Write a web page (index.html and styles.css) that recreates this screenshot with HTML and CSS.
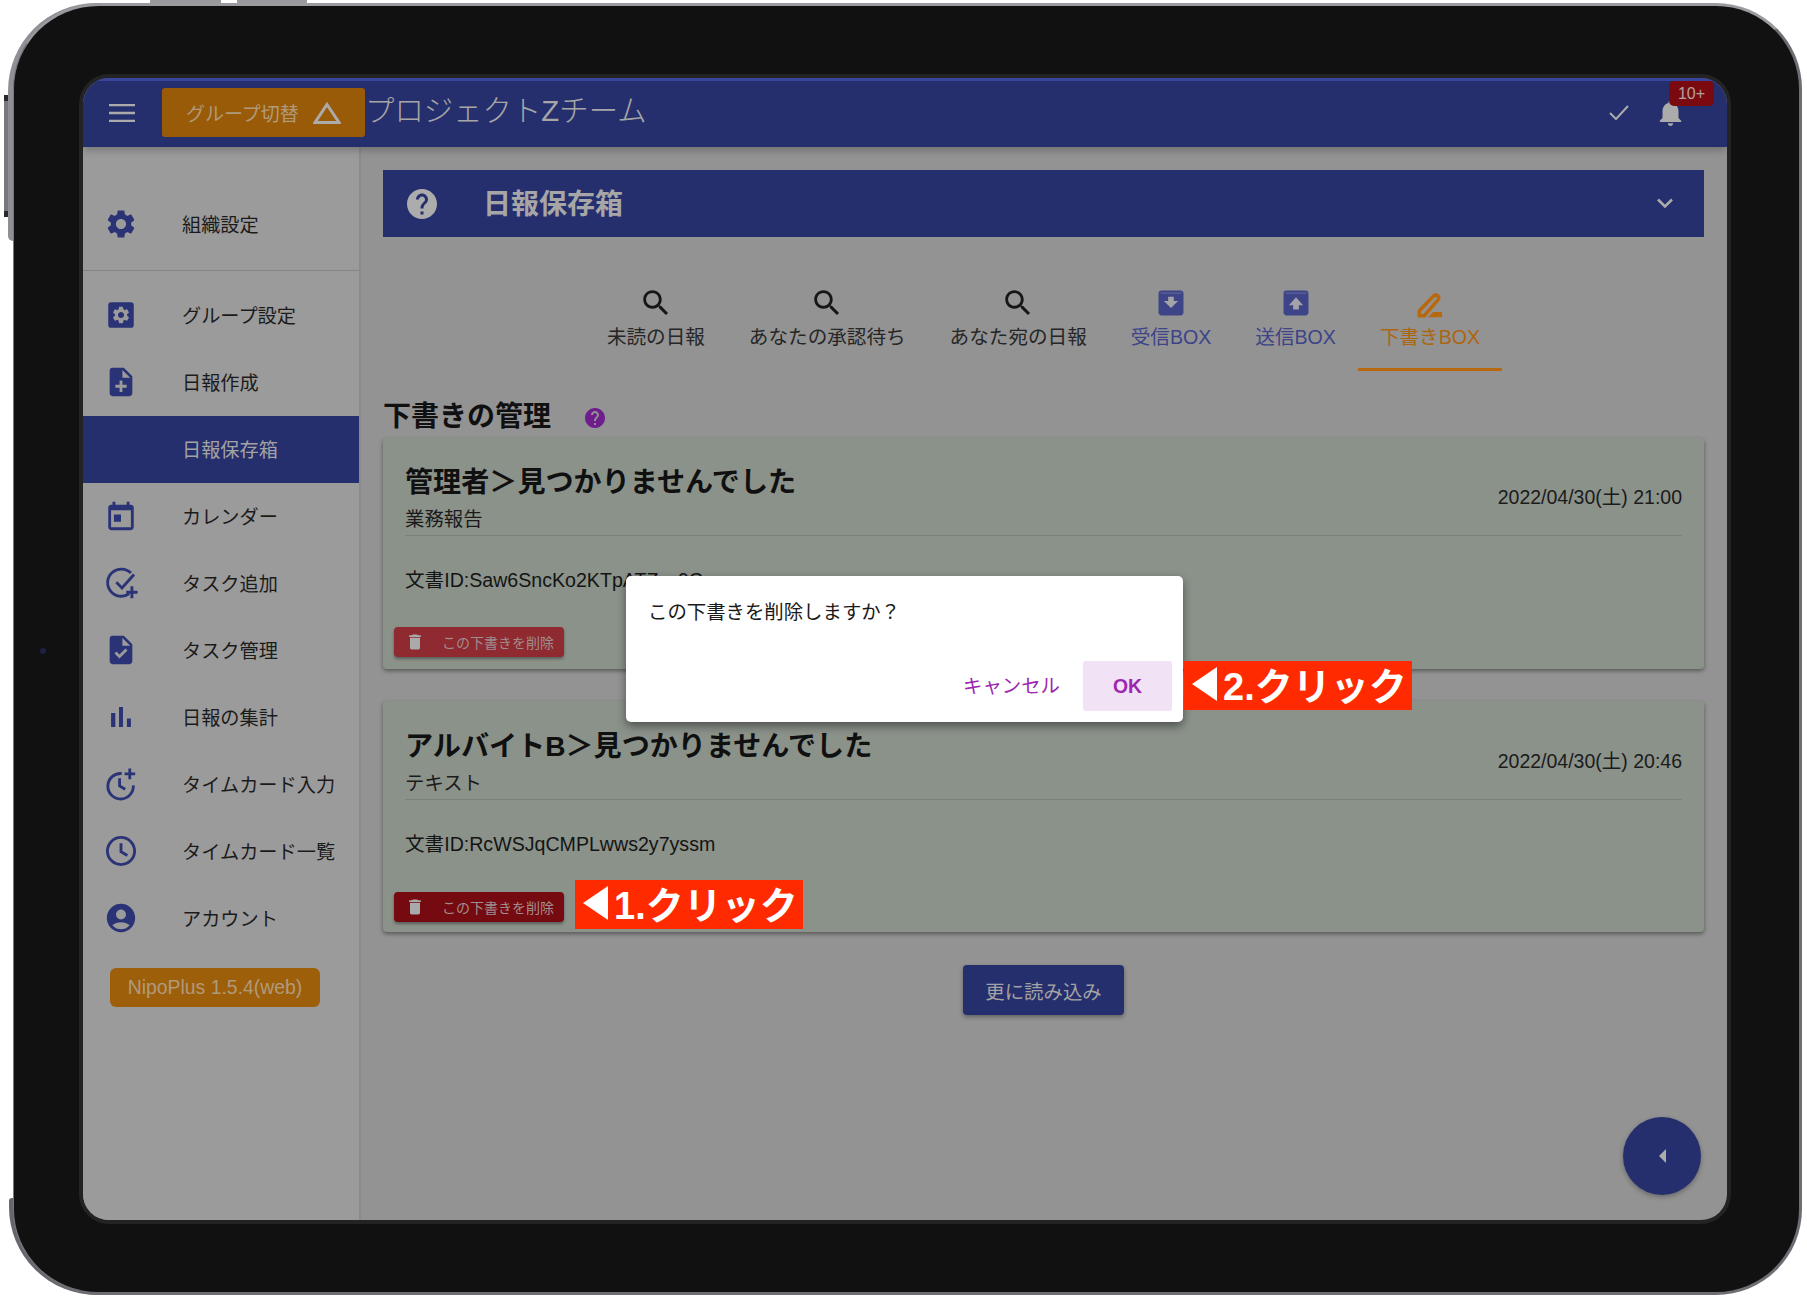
FILE: index.html
```html
<!DOCTYPE html>
<html lang="ja">
  <head>
    <title>日報保存箱</title>
    <link rel="stylesheet" href="styles.css">
  </head>
  <body>
    <svg class="sprite" width="0" height="0">
      <symbol id="i-search" viewBox="0 0 24 24"><path d="M15.5 14h-.79l-.28-.27C15.41 12.59 16 11.11 16 9.5 16 5.91 13.09 3 9.5 3S3 5.91 3 9.5 5.91 16 9.5 16c1.61 0 3.09-.59 4.23-1.57l.27.28v.79l5 4.99L20.49 19l-4.99-5zm-6 0C7.01 14 5 11.99 5 9.5S7.01 5 9.5 5 14 7.01 14 9.5 11.99 14 9.5 14z"/></symbol>
      <symbol id="i-trash" viewBox="0 0 24 24"><path d="M6 19c0 1.1.9 2 2 2h8c1.1 0 2-.9 2-2V7H6v12zM19 4h-3.5l-1-1h-5l-1 1H5v2h14V4z"/></symbol>
      <symbol id="i-help" viewBox="0 0 24 24"><path d="M12 2C6.48 2 2 6.48 2 12s4.48 10 10 10 10-4.48 10-10S17.52 2 12 2zm1 17h-2v-2h2v2zm2.07-7.75l-.9.92C13.45 12.9 13 13.5 13 15h-2v-.5c0-1.1.45-2.1 1.17-2.83l1.24-1.26c.37-.36.59-.86.59-1.41 0-1.1-.9-2-2-2s-2 .9-2 2H8c0-2.21 1.79-4 4-4s4 1.79 4 4c0 .88-.36 1.68-.93 2.25z"/></symbol>
      <symbol id="i-gear" viewBox="0 0 24 24"><path d="M19.14 12.94c.04-.3.06-.61.06-.94 0-.32-.02-.64-.07-.94l2.03-1.58c.18-.14.23-.41.12-.61l-1.92-3.32c-.12-.22-.37-.29-.59-.22l-2.39.96c-.5-.38-1.03-.7-1.62-.94l-.36-2.54c-.04-.24-.24-.41-.48-.41h-3.84c-.24 0-.43.17-.47.41l-.36 2.54c-.59.24-1.13.57-1.62.94l-2.39-.96c-.22-.08-.47 0-.59.22L2.74 8.87c-.12.21-.08.47.12.61l2.03 1.58c-.05.3-.09.63-.09.94s.02.64.07.94l-2.03 1.58c-.18.14-.23.41-.12.61l1.92 3.32c.12.22.37.29.59.22l2.39-.96c.5.38 1.03.7 1.62.94l.36 2.54c.05.24.24.41.48.41h3.84c.24 0 .44-.17.47-.41l.36-2.54c.59-.24 1.13-.56 1.62-.94l2.39.96c.22.08.47 0 .59-.22l1.92-3.32c.12-.22.07-.47-.12-.61l-2.01-1.58zM12 15.6c-1.98 0-3.6-1.62-3.6-3.6s1.62-3.6 3.6-3.6 3.6 1.62 3.6 3.6-1.62 3.6-3.6 3.6z"/></symbol>
    </svg>

    <div class="side-key side-key-a"></div>
    <div class="side-key side-key-b"></div>
    <div class="side-rocker"></div>
    <div class="edge edge-top"></div>
    <div class="edge edge-bottom"></div>
    <div class="tablet">
      <span class="camera"></span>
      <div class="screen">

        <!-- top bar -->
        <header class="appbar">
          <svg class="burger" viewBox="0 0 26 18"><path d="M0 1h26M0 9h26M0 17h26"/></svg>
          <div class="group-btn">
            <span>グループ切替</span>
            <svg class="group-tri" viewBox="0 0 28 22"><path d="M14 2.5 26 20.5H2Z"/></svg>
          </div>
          <div class="app-title">プロジェクトZチーム</div>
          <div class="app-actions">
            <svg class="app-check" viewBox="0 0 20 15"><path d="M1 8l6 6L19 1"/></svg>
            <svg class="app-bell" viewBox="4 2.5 16 19.5"><path d="M12 22c1.1 0 2-.9 2-2h-4c0 1.1.89 2 2 2zm6-6v-5c0-3.07-1.64-5.64-4.5-6.32V4c0-.83-.67-1.5-1.5-1.5s-1.5.67-1.5 1.5v.68C7.63 5.36 6 7.92 6 11v5l-2 2v1h16v-1l-2-2z"/></svg>
            <span class="badge">10+</span>
          </div>
        </header>

        <div class="body">
          <!-- left menu -->
          <nav class="sidebar">
            <a class="nav-item nav-first">
              <svg class="nav-icon" viewBox="0 0 24 24"><use href="#i-gear"/></svg>組織設定
            </a>
            <div class="nav-rule"></div>
            <a class="nav-item">
              <svg class="nav-icon" viewBox="0 0 24 24"><rect x="3" y="3" width="18" height="18" rx="2"/><g transform="translate(4.8 4.8) scale(.6)" class="hole"><use href="#i-gear" width="24" height="24"/></g></svg>グループ設定
            </a>
            <a class="nav-item">
              <svg class="nav-icon" viewBox="0 0 24 24"><path d="M14 2H6c-1.1 0-1.99.9-1.99 2L4 20c0 1.1.89 2 1.99 2H18c1.1 0 2-.9 2-2V8l-6-6zm2 14h-3v3h-2v-3H8v-2h3v-3h2v3h3v2zm-3-7V3.5L18.5 9H13z"/></svg>日報作成
            </a>
            <a class="nav-item nav-active">日報保存箱</a>
            <a class="nav-item">
              <svg class="nav-icon" viewBox="0 0 24 24"><path d="M19 4h-1V2h-2v2H8V2H6v2H5c-1.11 0-1.99.9-1.99 2L3 20c0 1.1.89 2 2 2h14c1.1 0 2-.9 2-2V6c0-1.1-.9-2-2-2zm0 16H5V8h14v12zM7 11h5v5H7z"/></svg>カレンダー
            </a>
            <a class="nav-item">
              <svg class="nav-icon nav-line" viewBox="0 0 24 24"><g transform="translate(1.2 0)"><path d="M16.5 19.600A9.600 9.600 0 1 1 17.800 5"/><path d="M7.500 11.500l4 4L20 6"/><path d="M14.500 18.500h8M18.500 14.300v8.400"/></g></svg>タスク追加
            </a>
            <a class="nav-item">
              <svg class="nav-icon" viewBox="0 0 24 24"><path d="M14 2H6c-1.1 0-1.99.9-1.99 2L4 20c0 1.1.89 2 1.99 2H18c1.1 0 2-.9 2-2V8l-6-6zm-3.06 16L7.4 14.46l1.41-1.41 2.12 2.12 4.24-4.24 1.41 1.41L10.94 18zM13 9V3.5L18.5 9H13z"/></svg>タスク管理
            </a>
            <a class="nav-item">
              <svg class="nav-icon" viewBox="0 0 24 24"><path d="M5 9.2h3V19H5zM10.6 5h2.8v14h-2.8zm5.6 8H19v6h-2.8z"/></svg>日報の集計
            </a>
            <a class="nav-item">
              <svg class="nav-icon nav-line" viewBox="0 0 24 24"><path d="M12.500 4.600A9 9 0 1 0 20.700 13"/><path d="M11 8v5.300l4 2.400"/><path d="M14.500 4.800h7.500M18.200 1v7.600"/></svg>タイムカード入力
            </a>
            <a class="nav-item">
              <svg class="nav-icon nav-line" viewBox="0 0 24 24"><circle cx="12" cy="12" r="9.600"/><path d="M12 6.500v6l4.500 2.700"/></svg>タイムカード一覧
            </a>
            <a class="nav-item">
              <svg class="nav-icon" viewBox="0 0 24 24"><path d="M12 2C6.48 2 2 6.48 2 12s4.48 10 10 10 10-4.48 10-10S17.52 2 12 2zm0 4c1.93 0 3.5 1.57 3.5 3.5S13.93 13 12 13s-3.5-1.57-3.5-3.5S10.07 6 12 6zm0 14c-2.03 0-4.43-.82-6.14-2.88C7.55 15.8 9.68 15 12 15s4.45.8 6.14 2.12C16.43 19.18 14.03 20 12 20z"/></svg>アカウント
            </a>
            <div class="version">NipoPlus 1.5.4(web)</div>
          </nav>

          <main class="main">
            <div class="panel-head">
              <svg class="panel-help"><use href="#i-help"/></svg>
              <span class="panel-title">日報保存箱</span>
              <svg class="panel-chevron" viewBox="0 0 16 10"><path d="M1 1.5l7 7 7-7"/></svg>
            </div>

            <div class="tabs">
              <div class="tab">
                <svg class="tab-icon"><use href="#i-search"/></svg>未読の日報
              </div>
              <div class="tab">
                <svg class="tab-icon"><use href="#i-search"/></svg>あなたの承認待ち
              </div>
              <div class="tab">
                <svg class="tab-icon"><use href="#i-search"/></svg>あなた宛の日報
              </div>
              <div class="tab tab-blue">
                <svg class="tab-icon" viewBox="0 0 24 24"><rect x="3.200" y="3.200" width="17.600" height="17.600" rx="2.200"/><path class="hole-line" d="M4.500 5h15"/><path class="hole" d="M10 7.500h4v3h3l-5 5-5-5h3z"/></svg>受信BOX
              </div>
              <div class="tab tab-blue">
                <svg class="tab-icon" viewBox="0 0 24 24"><rect x="3.200" y="3.200" width="17.600" height="17.600" rx="2.200"/><path class="hole-line" d="M4.500 5h15"/><path class="hole" d="M10 16.500v-3H7l5-5.500 5 5.500h-3v3z"/></svg>送信BOX
              </div>
              <div class="tab tab-on">
                <svg class="tab-icon" viewBox="0 0 24 24"><path class="pen" d="M4.500 21 4.500 17.500 14.500 7c1-1 2-1 3 0 .8.8.8 2 0 3L8 21z"/><path d="M10.500 22 14.200 18.400H20.500V22z"/></svg>下書きBOX
              </div>
            </div>

            <h2 class="section-title">下書きの管理
              <svg class="section-help"><use href="#i-help"/></svg>
            </h2>

            <section class="card">
              <div class="card-head">
                <div>
                  <h3 class="card-title">管理者＞見つかりませんでした</h3>
                  <div class="card-sub">業務報告</div>
                </div>
                <div class="card-date">2022/04/30(土) 21:00</div>
              </div>
              <div class="card-doc">文書ID:Saw6SncKo2KTpATZxx9C</div>
              <button class="del-btn del-btn-focus"><svg class="del-icon"><use href="#i-trash"/></svg>この下書きを削除</button>
            </section>

            <section class="card">
              <div class="card-head">
                <div>
                  <h3 class="card-title">アルバイトB＞見つかりませんでした</h3>
                  <div class="card-sub">テキスト</div>
                </div>
                <div class="card-date">2022/04/30(土) 20:46</div>
              </div>
              <div class="card-doc">文書ID:RcWSJqCMPLwws2y7yssm</div>
              <button class="del-btn"><svg class="del-icon"><use href="#i-trash"/></svg>この下書きを削除</button>
            </section>

            <button class="more-btn">更に読み込み</button>
          </main>
        </div>

        <!-- confirm dialog and the red notes laid over the shot -->
        <div class="dialog">
          <div class="dialog-text">この下書きを削除しますか？</div>
          <div class="dialog-actions">
            <span class="dialog-cancel">キャンセル</span>
            <span class="dialog-ok">OK</span>
          </div>
        </div>
        <div class="note note-two"><i class="note-arrow"></i>2.クリック</div>
        <div class="note note-one"><i class="note-arrow"></i>1.クリック</div>
        <div class="fab"><i class="fab-arrow"></i></div>
      </div>
    </div>
  </body>
</html>
```

FILE: styles.css
```css
html, body {
  margin: 0;
  background: #fff;
}

body {
  width: 1807px;
  height: 1302px;
  overflow: hidden;
  position: relative;
  font-family: "Liberation Sans", "Noto Sans CJK JP", sans-serif;
  font-size: 19.4px;
  color: #1c1c1c;
}

.sprite {
  position: absolute;
}

/* Device frame */
.tablet {
  box-sizing: border-box;
  position: relative;
  width: 1789px;
  height: 1292px;
  margin: 3px 0 0 13px;
  padding: 72px 0 0 69px;
  background: #111;
  border: 3px solid #6d6d74;
  border-top-color: #9a9a9f;
  border-left: 1px solid #77777c;
  border-radius: 86px;
}

.side-key {
  position: absolute;
  top: 0;
  height: 3px;
  background: #9a9a9e;
}

.side-key-a {
  left: 150px;
  width: 71px;
}

.side-key-b {
  left: 237px;
  width: 70px;
}

.side-rocker {
  position: absolute;
  left: 4px;
  top: 95px;
  width: 4px;
  height: 122px;
  background: #77777c;
  border-top: 6px solid #2a2a2c;
  border-bottom: 6px solid #2a2a2c;
  box-sizing: border-box;
}

/* Thicker rim at the left corners, sits under the tablet body */
.edge {
  position: absolute;
  left: 8px;
  width: 110px;
  background: #8f8f95;
}

.edge-top {
  top: 3px;
  height: 238px;
  border-top-left-radius: 88px;
  border-bottom-left-radius: 5px;
}

.edge-bottom {
  top: 1198px;
  height: 97px;
  left: 9px;
  background: #66666d;
  border-top-left-radius: 3px;
  border-bottom-left-radius: 88px;
}

.camera {
  position: absolute;
  left: 26px;
  top: 642px;
  width: 6px;
  height: 6px;
  border-radius: 50%;
  background: #1d2244;
}

.screen {
  position: relative;
  display: flex;
  flex-direction: column;
  width: 1644px;
  height: 1142px;
  border-radius: 26px;
  overflow: hidden;
  background: #939393;
  box-shadow: 0 0 0 4px #232323;
}

/* Top bar */
.appbar {
  box-sizing: border-box;
  position: relative;
  z-index: 2;
  display: flex;
  align-items: center;
  flex: none;
  height: 69px;
  padding: 0 0 3px 26px;
  background: #262f6e;
  border-top: 3px solid #37459c;
  box-shadow: 0 3px 8px rgba(0, 0, 0, .25);
  color: #a8a8a8;
}

.burger {
  width: 26px;
  height: 18px;
  fill: none;
  stroke: #ababab;
  stroke-width: 2.5;
}

.group-btn {
  box-sizing: border-box;
  display: flex;
  align-items: center;
  justify-content: space-between;
  width: 203px;
  height: 49px;
  margin-left: 27px;
  padding: 0 24px;
  background: #9a5b08;
  border-radius: 3px;
  font-size: 19px;
  color: #b09a7c;
}

.group-tri {
  width: 28px;
  height: 22px;
  fill: none;
  stroke: #ababab;
  stroke-width: 3;
}

.app-title {
  margin: -10px 0 0 0;
  font-size: 29.4px;
  font-weight: 300;
  color: #a6a6a6;
}

.app-actions {
  position: relative;
  display: flex;
  align-items: center;
  margin-left: auto;
  margin-right: 45px;
}

.app-check {
  width: 20px;
  height: 15px;
  margin-right: 30px;
  fill: none;
  stroke: #ababab;
  stroke-width: 2;
}

.app-bell {
  width: 23px;
  height: 26px;
  fill: #ababab;
}

.badge {
  position: absolute;
  left: 60px;
  top: -19px;
  width: 45px;
  height: 25px;
  line-height: 25px;
  text-align: center;
  background: #7a0a10;
  border-radius: 5px;
  font-size: 16px;
  color: #b3a0a0;
}

/* Left menu */
.body {
  display: flex;
  flex: 1;
  min-height: 0;
}

.sidebar {
  box-sizing: border-box;
  flex: none;
  width: 278px;
  padding-top: 44px;
  background: #9b9b9b;
  border-right: 2px solid #8a8a8a;
}

.nav-item {
  box-sizing: border-box;
  display: flex;
  align-items: center;
  height: 67px;
  padding: 0 0 2px 99px;
  position: relative;
  font-size: 19.2px;
  color: #1b1b1b;
}

.nav-first {
  margin-bottom: 12px;
}

.nav-rule {
  height: 1px;
  margin-bottom: 11px;
  background: #858585;
}

.nav-active {
  background: #262f6e;
  color: #a3a3a3;
}

.nav-icon {
  position: absolute;
  left: 21px;
  width: 34px;
  height: 34px;
  fill: #2a3375;
}

.nav-line {
  fill: none;
  stroke: #2a3375;
  stroke-width: 2;
}

.hole {
  fill: #9b9b9b;
}

.version {
  width: 210px;
  height: 39px;
  margin: 16px 0 0 27px;
  line-height: 39px;
  text-align: center;
  background: #9e5f0a;
  border-radius: 6px;
  font-size: 19.4px;
  color: #b09a7c;
}

/* Main column */
.main {
  flex: 1;
  min-width: 0;
  padding: 23px 23px 0 22px;
}

.panel-head {
  display: flex;
  align-items: center;
  height: 67px;
  padding: 0 31px 0 21px;
  background: #262f6e;
  color: #a6a6a6;
}

.panel-help {
  width: 36px;
  height: 36px;
  fill: #acacac;
}

.panel-title {
  margin: -3px 0 0 43px;
  font-size: 28px;
  font-weight: 700;
}

.panel-chevron {
  width: 16px;
  height: 10px;
  margin: -2px 0 0 auto;
  fill: none;
  stroke: #ababab;
  stroke-width: 2.5;
}

/* Tabs */
.tabs {
  display: flex;
  justify-content: center;
  margin-top: 49px;
}

.tab {
  box-sizing: border-box;
  display: flex;
  flex-direction: column;
  align-items: center;
  height: 85px;
  padding: 0 22px;
  border-bottom: 3px solid transparent;
  font-size: 19.6px;
  line-height: 30px;
  white-space: nowrap;
  color: #262626;
}

.tab-icon {
  width: 34px;
  height: 34px;
  margin-bottom: 2px;
  fill: #161616;
}

.tab-blue {
  color: #3d4488;
}

.tab-blue .tab-icon {
  fill: #3d4488;
}

.tab-blue .hole {
  fill: #a3a3a8;
}

.hole-line {
  fill: none;
  stroke: #8a8ca8;
  stroke-width: .4;
}

.tab-on {
  border-bottom-color: #b8680f;
  color: #ad660f;
}

.tab-on .tab-icon {
  fill: #b8680f;
}

.tab-on .pen {
  fill: none;
  stroke: #b8680f;
  stroke-width: 2.5;
}

.section-title {
  display: flex;
  align-items: center;
  height: 40px;
  margin: 23px 0 4px;
  font-size: 28px;
  font-weight: 700;
  color: #101010;
}

.section-help {
  width: 24px;
  height: 24px;
  margin: 7px 0 0 32px;
  fill: #6f1d8c;
}

/* Draft cards */
.card {
  box-sizing: border-box;
  height: 231px;
  margin-bottom: 32px;
  padding: 24px 0 0;
  background: #8b928a;
  border-radius: 4px;
  box-shadow: 0 2px 4px rgba(0, 0, 0, .4);
}

.card + .card {
  padding-top: 25px;
}

.card-head {
  display: flex;
  align-items: center;
  justify-content: space-between;
  height: 73px;
  margin: 0 22px;
  border-bottom: 1px solid #7c827b;
}

.card-title {
  margin: 0;
  height: 40px;
  line-height: 40px;
  font-size: 28.1px;
  font-weight: 700;
  color: #101010;
  white-space: nowrap;
}

.card-sub {
  height: 30px;
  margin-top: 1px;
  line-height: 30px;
  color: #1b1b1b;
}

.card-date {
  margin-top: -6px;
  font-size: 19.5px;
  color: #1b1b1b;
}

.card-doc {
  height: 30px;
  margin: 29px 22px 0;
  line-height: 30px;
  font-size: 19.6px;
  color: #141414;
}

.del-btn {
  display: flex;
  align-items: center;
  width: 170px;
  height: 30px;
  margin: 33px 0 0 11px;
  padding: 0;
  background: #750a10;
  border: 0;
  border-radius: 4px;
  box-shadow: 0 2px 3px rgba(0, 0, 0, .35);
  font-family: inherit;
  font-size: 14px;
  color: #a08e8e;
}

.del-btn-focus {
  margin-top: 32px;
  background: #8f2a30;
}

.del-icon {
  width: 20px;
  height: 20px;
  margin: 0 17px 0 11px;
  fill: #aaa;
}

.more-btn {
  display: block;
  width: 161px;
  height: 50px;
  margin: 33px auto 0;
  background: #262f6e;
  border: 0;
  border-radius: 4px;
  box-shadow: 0 2px 4px rgba(0, 0, 0, .35);
  font-family: inherit;
  font-size: 19.4px;
  color: #a3a3a3;
}

/* Overlays */
.dialog {
  box-sizing: border-box;
  position: absolute;
  z-index: 5;
  left: 543px;
  top: 498px;
  width: 557px;
  height: 146px;
  padding: 21px 11px 0 22px;
  background: #fff;
  border-radius: 5px;
  box-shadow: 0 4px 10px rgba(0, 0, 0, .45);
}

.dialog-text {
  height: 30px;
  line-height: 30px;
  color: #1a1a1a;
}

.dialog-actions {
  display: flex;
  align-items: center;
  justify-content: flex-end;
  margin-top: 34px;
  color: #9c27b0;
}

.dialog-cancel {
  margin: 0 23px 4px 0;
}

.dialog-ok {
  width: 89px;
  height: 50px;
  line-height: 50px;
  text-align: center;
  background: #f2e2f5;
  border-radius: 3px;
  font-weight: 700;
}

.note {
  box-sizing: border-box;
  position: absolute;
  z-index: 6;
  display: flex;
  align-items: center;
  width: 228px;
  height: 49px;
  padding: 0 0 4px 8px;
  background: #ff2a00;
  color: #fff;
  font-size: 38px;
  font-weight: 700;
  white-space: nowrap;
}

.note-two {
  left: 1101px;
  top: 583px;
}

.note-one {
  left: 492px;
  top: 802px;
}

.note-arrow {
  margin-right: 6px;
  border-style: solid;
  border-width: 17px 25px 17px 0;
  border-color: transparent #fff transparent transparent;
}

.fab {
  position: absolute;
  z-index: 3;
  left: 1540px;
  top: 1039px;
  display: flex;
  align-items: center;
  justify-content: center;
  width: 78px;
  height: 78px;
  border-radius: 50%;
  background: #262f6e;
  box-shadow: 0 2px 5px rgba(0, 0, 0, .3);
}

.fab-arrow {
  border-style: solid;
  border-width: 7px 7px 7px 0;
  border-color: transparent #acacac transparent transparent;
}
```
